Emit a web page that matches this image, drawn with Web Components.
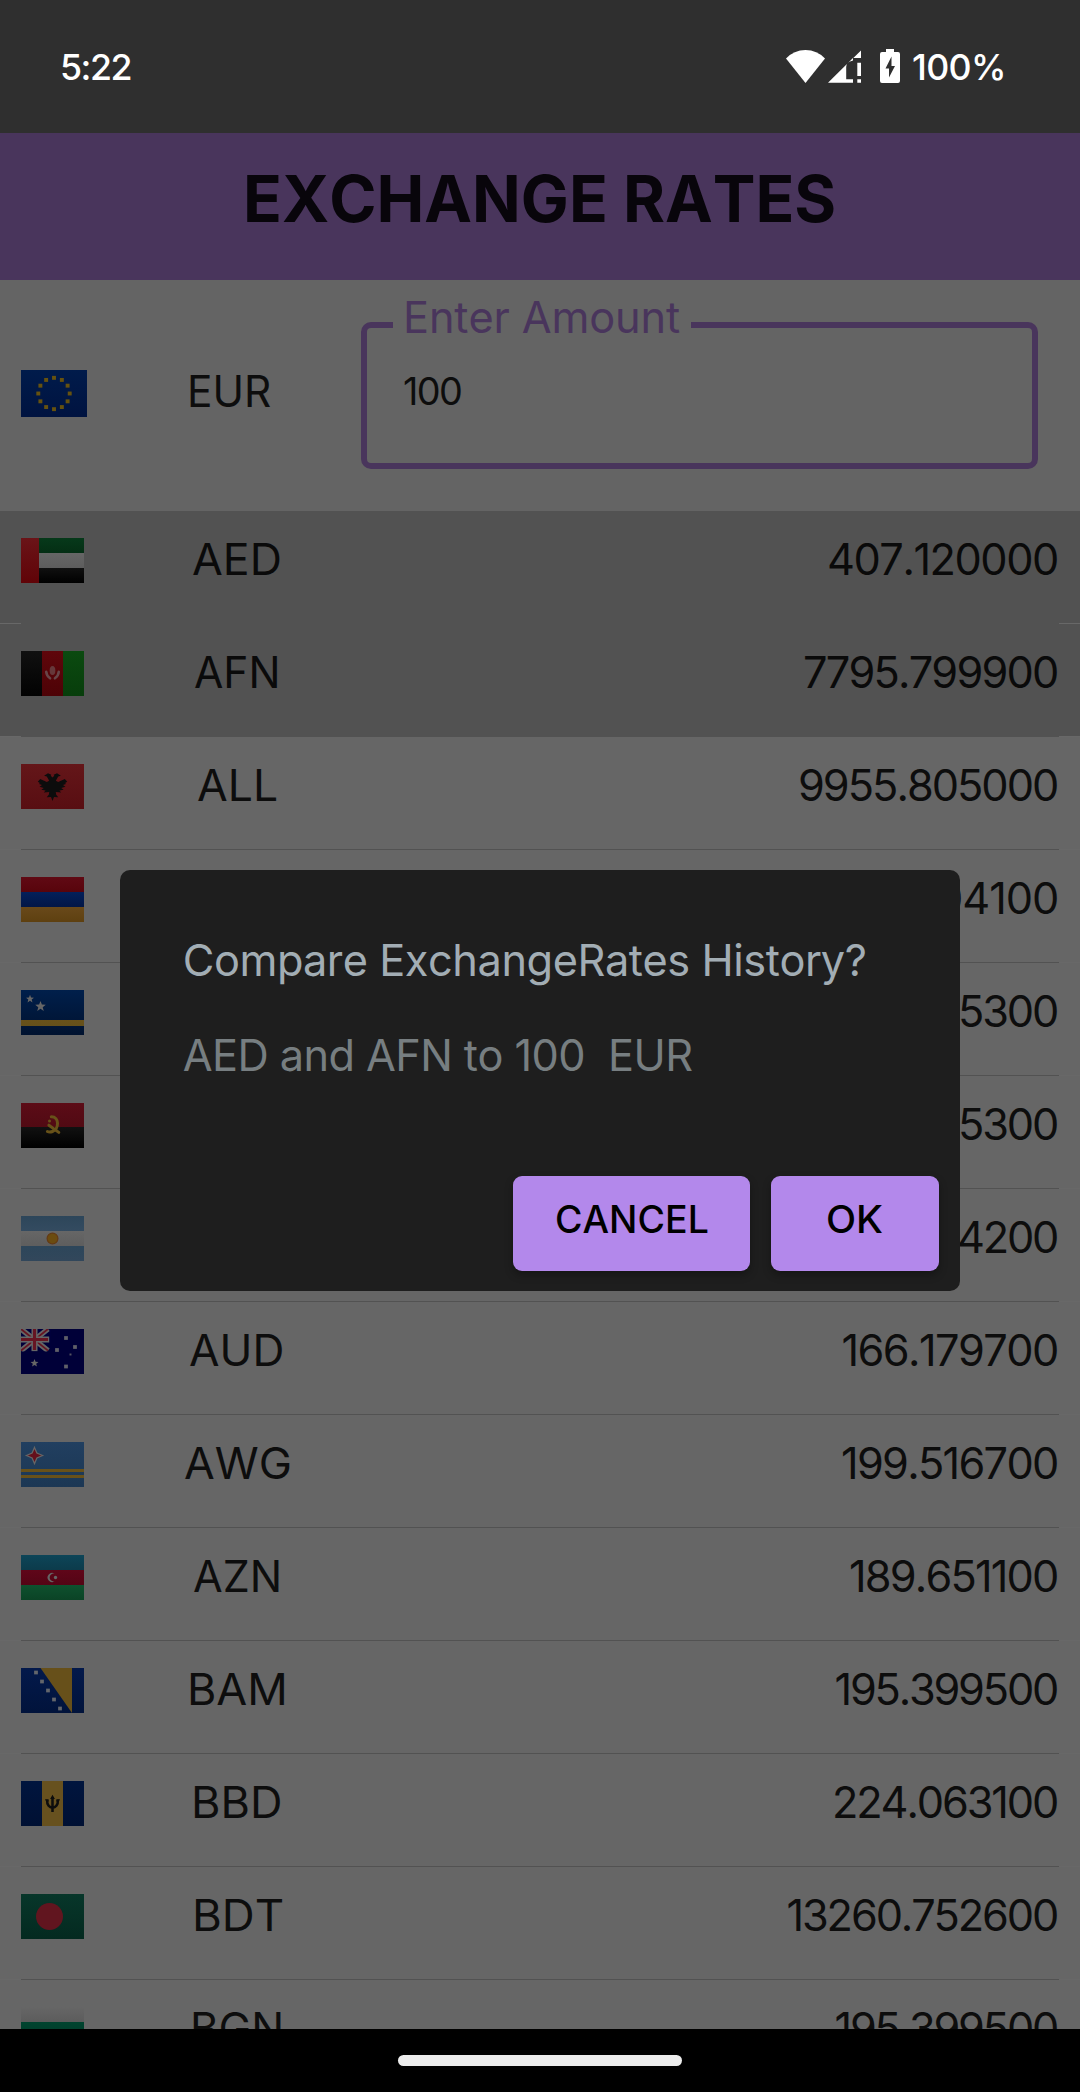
<!DOCTYPE html>
<html lang="en">
<head>
<meta charset="utf-8">
<title>Exchange Rates</title>
<style>
html,body{margin:0;padding:0;background:#000}
body{font-family:Inter,"Liberation Sans",sans-serif;color:#0d0d0d}
</style>
</head>
<body>
<exchange-app></exchange-app>
<script>
const pen = document.createElement('canvas').getContext('2d');

/* Text run with a given cap height and ink width; it fills the width by
   letter spacing, or by widening the letters when "stretch" is set. */
class FitText extends HTMLElement {
  connectedCallback() {
    const cap = +this.getAttribute('cap'), width = +this.getAttribute('w');
    const weight = this.getAttribute('weight') || 400;
    const text = this.getAttribute('text');
    const size = cap / 0.727;
    const root = this.attachShadow({mode: 'open'});
    root.innerHTML = `<style>:host{display:block;flex:none;width:${width}px;height:${cap}px;white-space:pre}
      span{display:block;width:max-content;font-size:${size}px;line-height:${cap}px;font-weight:${weight};font-kerning:none;transform-origin:0 0}</style><span></span>`;
    const span = root.querySelector('span');
    span.textContent = text;
    pen.font = `${weight} ${size}px Inter`;
    pen.fontKerning = 'none';
    const m = pen.measureText(text);
    const ink = m.actualBoundingBoxLeft + m.actualBoundingBoxRight;
    if (this.hasAttribute('stretch')) {
      const k = width / ink;
      span.style.transform = `scaleX(${k})`;
      span.style.marginLeft = m.actualBoundingBoxLeft * k + 'px';
    } else {
      span.style.letterSpacing = (width - ink) / Math.max(1, text.length - 1) + 'px';
      span.style.marginLeft = m.actualBoundingBoxLeft + 'px';
    }
  }
}
customElements.define('fit-text', FitText);

/* Flag drawings on a 21 x 15 grid, three pixels to a unit. */
const star = (cx, cy, r, fill) => {
  let p = '';
  for (let i = 0; i < 10; i++) {
    const q = i % 2 ? r * 0.42 : r, a = Math.PI * (i / 5 - 0.5);
    p += (cx + q * Math.cos(a)).toFixed(2) + ',' + (cy + q * Math.sin(a)).toFixed(2) + ' ';
  }
  return `<polygon points="${p}" fill="${fill}"/>`;
};
const dots = (list, s, fill) => list.map(([x, y]) => `<rect x="${x - s / 2}" y="${y - s / 2}" width="${s}" height="${s}" fill="${fill}"/>`).join('');
const flags = {
  EUR: {bars: [[0,0,21,15,'#001b4b','#001340']],
    art: dots([...Array(12)].map((_, i) => [10.5 + 5 * Math.cos(i * Math.PI / 6), 7.5 + 5 * Math.sin(i * Math.PI / 6)]), 1.25, '#66520f')},
  AED: {bars: [[0,0,21,5,'#06391a','#042e14'],[0,5,21,5,'#666','#5d5d5d'],[0,10,21,5,'#101010','#000'],[0,0,6,15,'#6a1418','#600307']]},
  AFN: {bars: [[0,0,7,15,'#101010','#020202'],[7,0,7,15,'#5f060b','#4d0206'],[14,0,7,15,'#0b4a10','#073d0b']],
    art: '<ellipse cx="10.5" cy="6.5" rx=".95" ry="1.5" fill="#66383a"/><path d="M8.4 6.9q.1 1.4 1.3 2.2M12.6 6.9q-.1 1.4-1.3 2.2" fill="none" stroke="#674548" stroke-width=".85" stroke-linecap="round"/>'},
  ALL: {bars: [[0,0,21,15,'#641619','#580e12']],
    art: '<path d="M10.5 4.5 9.9 3.9 10.1 3.6 9 3.1 7.7 3.9 8.6 4.2 9.4 5.6 8.6 6 6.4 5 5.6 5.9 6.3 6.3 6 6.7 7 7 6.2 7.6 7.6 8 6.8 8.6 8.2 8.8 7.6 9.5 9.4 9.3 9.3 10.2 8.6 11.1 10 11 10.5 12.3 11 11 12.4 11.1 11.7 10.2 11.6 9.3 13.4 9.500 12.800 8.800 14.200 8.600 13.400 8 14.800 7.600 14 7 15 6.700 14.700 6.300 15.400 5.900 14.600 5 12.400 6 11.600 5.600 12.400 4.200 13.300 3.900 12 3.100 10.900 3.600 11.100 3.900Z" fill="#0c0c0c"/>'},
  AMD: {bars: [[0,0,21,5,'#600a14','#58040c'],[0,5,21,5,'#04205a','#021646'],[0,10,21,5,'#69491a','#5e4010']]},
  ANG: {bars: [[0,0,21,15,'#001f4b','#00122f'],[0,10,21,2,'#68511a','#64501b']], art: star(3, 3, 1.4, '#666') + star(6.5, 5.5, 1.85, '#666')},
  AOA: {bars: [[0,0,21,8,'#5c0c17','#510a13'],[0,8,21,7,'#111','#000']],
    art: '<path d="M10.1 4.6c2.8 0 2.6 4.1.4 4.9q-1 .4-1.700 0M9.300 7.400l3.300 2.400" fill="none" stroke="#685219" stroke-width="1" stroke-linecap="round"/><circle cx="9.5" cy="6" r=".5" fill="#685219"/>'},
  ARS: {bars: [[0,0,21,5,'#2d465a','#344b60'],[0,5,21,5,'#666','#5e5e5e'],[0,10,21,5,'#2d465a','#32475b']],
    art: '<circle cx="10.5" cy="7.5" r="1.8" fill="#6b4c10" stroke="#643a15" stroke-width=".4"/>'},
  AUD: {bars: [[0,0,21,15,'#00003c','#000033']],
    art: '<path d="M0 0 9 7.2M9 0 0 7.2" stroke="#666" stroke-width="1.8"/><path d="M0 0 9 7.2M9 0 0 7.2" stroke="#661522" stroke-width=".6"/><path d="M4.5 0v7.4M0 3.5h9.4" stroke="#666" stroke-width="2"/><path d="M4.5 0v7M0 3.5h9" stroke="#661522" stroke-width="1.05"/><path d="M0 7.5h10V0h11v15H0Z" fill="#000038"/>' + star(4.5, 11.4, 1.4, '#666') + dots([[15,3],[12,7],[18,6],[15,12.5]], 1.25, '#606068') + dots([[16.5,8.5]], .65, '#555560')},
  AWG: {bars: [[0,0,21,15,'#213f60','#1c3754'],[0,9,21,1,'#68511a','#68511a'],[0,11,21,1,'#68511a','#68511a']],
    art: '<path d="M4.5 1.8 5.3 3.7 7.2 4.5 5.3 5.3 4.5 7.2 3.7 5.3 1.8 4.5 3.7 3.7Z" fill="#650f1c" stroke="#666" stroke-width=".4"/>'},
  AZN: {bars: [[0,0,21,5,'#0d4558','#0c3b4b'],[0,5,21,5,'#5f0619','#540415'],[0,10,21,5,'#0e512e','#0b4326']],
    art: '<path d="M11.2 6.25a1.5 1.5 0 1 0 0 2.5a1.3 1.3 0 1 1 0-2.5Z" fill="#666"/><circle cx="11.5" cy="7.5" r=".55" fill="#666"/>'},
  BAM: {bars: [[0,0,21,15,'#03194b','#01133b']],
    art: '<path d="M6.5 0H17V15Z" fill="#67501a"/>' + dots([[5,1.5],[7,4.5],[9,7.5],[11,10.5],[13,13.5]], 1.25, '#63666b')},
  BBD: {bars: [[0,0,21,15,'#00153e','#001033'],[7,0,7,15,'#67511f','#67511f']],
    art: '<path d="M10.5 5.3v5M8.7 6.3c-.2 3.500 3.800 3.500 3.600 0" fill="none" stroke="#0d0d0d" stroke-width=".85"/><path d="M9.700 6 10.500 4.600 11.300 6ZM8 6.100h1.200v.7H8.400ZM13 6.100h-1.200v.7h.8Z" fill="#0d0d0d"/>'},
  BDT: {bars: [[0,0,21,15,'#07362a','#042a20']], art: '<circle cx="9.5" cy="7.5" r="4.5" fill="#61151f"/>'},
  BGN: {bars: [[0,0,21,5,'#666','#5c5c5c'],[0,5,21,5,'#00442f','#003c29'],[0,10,21,5,'#5a0d10','#500a0d']]}
};
class CountryFlag extends HTMLElement {
  connectedCallback() {
    const f = flags[this.getAttribute('code')];
    const defs = f.bars.map((b, i) => `<linearGradient id="g${i}" x1="0" y1="0" x2="0" y2="1"><stop stop-color="${b[4]}"/><stop offset="1" stop-color="${b[5]}"/></linearGradient>`).join('');
    const bars = f.bars.map((b, i) => `<rect x="${b[0]}" y="${b[1]}" width="${b[2]}" height="${b[3]}" fill="url(#g${i})"/>`).join('');
    this.attachShadow({mode: 'open'}).innerHTML =
      `<style>:host{display:block;flex:none;width:63px;height:45px}svg{display:block;width:100%;height:100%}</style>
       <svg viewBox="0 0 21 15" preserveAspectRatio="none"><defs>${defs}</defs>${bars}${f.art || ''}</svg>`;
  }
}
customElements.define('country-flag', CountryFlag);

const define = (name, html) => customElements.define(name, class extends HTMLElement {
  connectedCallback() { this.attachShadow({mode: 'open'}).innerHTML = html; }
});

define('status-bar', `<style>
  :host{display:flex;justify-content:space-between;align-items:flex-start;box-sizing:border-box;height:133px;padding:53px 77px 0 62px;background:#2f2f2f;color:#fff}
  .icons{display:flex;align-items:flex-start}
  svg{display:block;margin-top:-5px}
  .icons fit-text{margin-left:13px}
  fit-text{margin-top:.5px}
  </style>
  <fit-text text="5:22" cap="26" w="68.5" weight="500"></fit-text>
  <div class="icons">
    <svg width="114" height="36" viewBox="0 0 114 36" fill="#fff">
      <path d="M0 10.5Q8 2 19.5 2T39 10.5L19.5 35Z"/>
      <path d="M42 34.800 67 10V12.500Q60.200 14 60.200 19V31.300H67V34.800ZM67.300 10 75 2.500V10ZM71.300 14.800H75V28H71.300ZM71.300 31.300H75V34.800H71.300Z"/>
      <path fill-rule="evenodd" d="M100 1h8v3h4q2 0 2 2V33q0 2-2 2H96q-2 0-2-2V6q0-2 2-2h4ZM105.5 8.5 99.5 20.5H103V29.5L109 18H105.5Z"/>
    </svg>
    <fit-text text="100%" cap="26" w="90" weight="500"></fit-text>
  </div>`);

define('app-header', `<style>
  :host{display:flex;justify-content:center;box-sizing:border-box;height:147px;padding:42px 0 0 1px;background:#49355c;color:#08050b}
  </style><fit-text stretch text="EXCHANGE RATES" cap="47" w="587" weight="700"></fit-text>`);

define('amount-field', `<style>
  :host{display:block;box-sizing:border-box;width:677px;height:147px;border:6px solid #49355c;border-radius:10px}
  .label{display:flex;width:298px;height:32px;box-sizing:border-box;padding-left:13px;margin:-26px 0 0 26px;background:#646464;color:#49355c}
  .value{margin:43.5px 0 0 37px}
  </style>
  <div class="label"><fit-text text="Enter Amount" cap="31.5" w="274"></fit-text></div>
  <fit-text class="value" text="100" cap="27.5" w="57"></fit-text>`);

define('base-currency', `<style>
  :host{display:flex;align-items:flex-start;box-sizing:border-box;height:231px;padding:42px 42px 0 21px;background:#646464}
  country-flag{width:66px;height:47px;margin-top:48px}
  .code{margin:53.5px 0 0 102.5px}
  amount-field{margin-left:auto}
  </style>
  <country-flag code="EUR"></country-flag>
  <fit-text stretch class="code" text="EUR" cap="31.5" w="80.5"></fit-text>
  <amount-field></amount-field>`);

class RateRow extends HTMLElement {
  connectedCallback() {
    const a = n => this.getAttribute(n);
    const selected = this.hasAttribute('selected');
    this.attachShadow({mode: 'open'}).innerHTML = `<style>
      :host{display:block;flex:none;color:${selected ? '#0a0a0a' : '#0d0d0d'}}
      .row{display:flex;justify-content:space-between;align-items:flex-start;height:112px;box-sizing:border-box;padding:27px 23px 0 21px;background:${selected ? '#525252' : '#666'}}
      .left{display:flex}
      .line{height:1px;margin:0 21px;background:#525252}
      .code{margin:5.5px 0 0 ${a('x') - 84}px}
      .rate{margin-top:5.5px}
      </style>
      <div class="row"><div class="left"><country-flag code="${a('code')}"></country-flag>
      ${a('x') ? `<fit-text stretch class="code" text="${a('code')}" cap="31.5" w="${a('cw')}"></fit-text>` : ''}</div>
      <fit-text class="rate" text="${a('rate')}" cap="31.5" w="${a('rw')}"></fit-text></div><div class="line"></div>`;
  }
}
customElements.define('rate-row', RateRow);

define('rate-list', `<style>:host{display:flex;flex-direction:column;height:1518px;overflow:hidden;background:#686868}</style><slot></slot>`);

define('nav-bar', `<style>:host{display:flex;justify-content:center;box-sizing:border-box;height:63px;padding-top:26px;background:#000}
  i{display:block;width:284px;height:11px;border-radius:6px;background:#ececec}</style><i></i>`);

define('dialog-button', `<style>:host{display:flex;justify-content:center;box-sizing:border-box;height:95px;padding:30px 0 0 1px;border-radius:9px;background:#b388eb;color:#000;box-shadow:0 4px 8px rgba(0,0,0,.3)}</style><slot></slot>`);

define('compare-dialog', `<style>
  :host{display:flex;flex-direction:column;box-sizing:border-box;width:840px;height:421px;padding:74.5px 21px 20px 0;border-radius:10px;background:#1e1e1e}
  .title{margin-left:64.7px;color:#a2adb4}
  .body{margin:64px 0 0 63.7px;color:#777e81}
  .actions{display:flex;justify-content:flex-end;gap:21px;margin-top:auto}
  </style>
  <fit-text class="title" text="Compare ExchangeRates History?" cap="31.5" w="680"></fit-text>
  <fit-text class="body" text="AED and AFN to 100  EUR" cap="31.5" w="508.5"></fit-text>
  <div class="actions">
    <dialog-button style="width:237px"><fit-text stretch text="CANCEL" cap="27.5" w="150.5" weight="500"></fit-text></dialog-button>
    <dialog-button style="width:168px"><fit-text stretch text="OK" cap="27.5" w="54" weight="500"></fit-text></dialog-button>
  </div>`);

const rates = [
  ['AED',193,86.5,'407.120000',228,1],['AFN',195,82,'7795.799900',252,1],['ALL',198,78.5,'9955.805000',257],
  ['AMD',0,0,'04100',119],['ANG',0,0,'5300',96],['AOA',0,0,'5300',96],['ARS',0,0,'4200',98],
  ['AUD',190,92,'166.179700',213.5],['AWG',185,104.5,'199.516700',214],['AZN',194,84.5,'189.651100',206],
  ['BAM',190,94.5,'195.399500',220.5],['BBD',194.5,86,'224.063100',222],['BDT',195,87,'13260.752600',268.5],['BGN',193.5,87.5,'195.399500',220.5]
];
define('exchange-app', `<style>
  :host{display:flex;flex-direction:column;position:relative;width:1080px;height:2092px;overflow:hidden}
  compare-dialog{position:absolute;left:120px;top:870px}
  </style>
  <status-bar></status-bar><app-header></app-header><base-currency></base-currency>
  <rate-list>${rates.map(([c,x,cw,r,rw,s]) => `<rate-row code="${c}" ${x ? `x="${x}" cw="${cw}"` : ''} rate="${r}" rw="${rw}" ${s ? 'selected' : ''}></rate-row>`).join('')}</rate-list>
  <nav-bar></nav-bar><compare-dialog></compare-dialog>`);
</script>
</body>
</html>
